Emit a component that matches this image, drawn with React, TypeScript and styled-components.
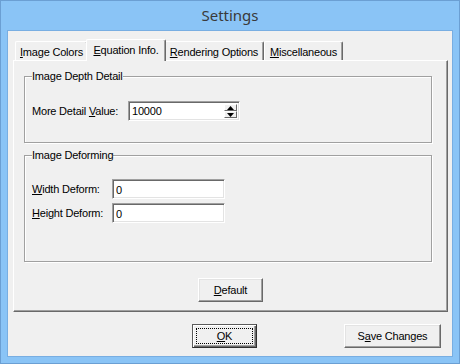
import React from 'react';
import styled, { createGlobalStyle, css } from 'styled-components';

const GlobalStyle = createGlobalStyle`
  html, body { margin: 0; padding: 0; background: #ffffff; }
  body { font-family: "Liberation Sans", Arial, sans-serif; }
  * { box-sizing: border-box; }
`;

const Window = styled.div`
  width: 460px;
  height: 364px;
  background: #8ac4f6;
  border: 1px solid #6b9fd3;
  display: flex;
  flex-direction: column;
`;

const TitleBar = styled.div`
  height: 29px;
  display: flex;
  align-items: center;
  justify-content: center;
  font-family: "Noto Sans", "Open Sans", sans-serif;
  font-size: 15px;
  color: #3a3a3a;
  padding-bottom: 1px;
`;

const Client = styled.div`
  flex: 1;
  margin: 0 6px 6px;
  border: 1px solid #78aee2;
  background: #f0f0f0;
  display: flex;
  flex-direction: column;
  font-family: "Liberation Sans", Arial, sans-serif;
  font-size: 11px;
  letter-spacing: -0.2px;
  color: #000;
`;

const TabControl = styled.div`
  margin: 8px 0 0 5px;
  width: 435px;
  display: flex;
  flex-direction: column;
`;

const TabStrip = styled.div`
  display: flex;
  align-items: flex-end;
  height: 21px;
  padding-left: 2px;
`;

const Tab = styled.div<{ $w: number; $active?: boolean }>`
  width: ${p => p.$w}px;
  height: 19px;
  background: #f0f0f0;
  border-top: 1px solid #ffffff;
  border-left: 1px solid #ffffff;
  border-right: 1px solid #696969;
  box-shadow: inset -1px 0 0 #a0a0a0;
  border-radius: 2px 2px 0 0;
  display: flex;
  align-items: center;
  justify-content: center;
  padding-top: 1px;
  white-space: nowrap;
  position: relative;
  ${p =>
    p.$active &&
    css`
      height: 22px;
      margin: 0 -2px -1px;
      padding-bottom: 3px;
      z-index: 2;
    `}
`;

const Accel = styled.span`
  text-decoration: underline;
  text-underline-offset: 1px;
`;

const Panel = styled.div`
  height: 252px;
  border: 1px solid;
  border-color: #ffffff #696969 #696969 #ffffff;
  box-shadow: inset -1px -1px 0 #a0a0a0;
  padding-top: 9px;
  display: flex;
  flex-direction: column;
`;

const GroupStack = styled.div`
  padding: 0 15px 0 10px;
  display: flex;
  flex-direction: column;
  gap: 6px;
`;

const Group = styled.fieldset<{ $pt: number; $pb: number }>`
  margin: 0;
  min-width: 0;
  border: 1px solid #a0a0a0;
  box-shadow: 1px 1px 0 #ffffff, inset 1px 1px 0 #ffffff;
  padding: ${p => p.$pt}px 7px ${p => p.$pb}px;
  display: flex;
  flex-direction: column;
  gap: 4px;
`;

const Legend = styled.legend`
  padding: 0;
  font-size: 11px;
  line-height: 13px;
  background: #f0f0f0;
`;

const Row = styled.div`
  display: flex;
  align-items: center;
  height: 20px;
`;

const Label = styled.span<{ $w: number }>`
  width: ${p => p.$w}px;
  white-space: nowrap;
`;

const sunken = css`
  border: 1px solid;
  border-color: #a0a0a0 #ffffff #ffffff #a0a0a0;
  box-shadow: inset 1px 1px 0 #696969, inset -1px -1px 0 #e3e3e3;
  background: #ffffff;
`;

const TextBox = styled.input<{ $w: number }>`
  ${sunken};
  width: ${p => p.$w}px;
  height: 20px;
  padding: 1px 3px 0;
  font-family: "Liberation Sans", Arial, sans-serif;
  font-size: 11px;
  letter-spacing: -0.2px;
  color: #000;
  outline: none;
`;

const SpinBox = styled.div`
  ${sunken};
  width: 112px;
  height: 20px;
  display: flex;
  align-items: stretch;
  padding: 2px;
`;

const SpinValue = styled.input`
  flex: 1;
  min-width: 0;
  border: none;
  background: transparent;
  padding: 0 1px;
  font-family: "Liberation Sans", Arial, sans-serif;
  font-size: 11px;
  letter-spacing: -0.2px;
  color: #000;
  outline: none;
`;

const SpinButtons = styled.div`
  width: 13px;
  display: flex;
  flex-direction: column;
`;

const SpinButton = styled.div`
  flex: 1;
  background: #f0f0f0;
  border: 1px solid;
  border-color: #ffffff #696969 #696969 #ffffff;
  display: flex;
  align-items: center;
  justify-content: center;
`;

const ButtonRow = styled.div`
  display: flex;
  justify-content: center;
  margin-top: 16px;
`;

const BottomBar = styled.div`
  display: grid;
  grid-template-columns: 1fr auto 1fr;
  margin-top: 12px;
  padding-right: 11px;
`;

const RightCell = styled.div`
  display: flex;
  justify-content: flex-end;
`;

const Button = styled.button<{ $w: number; $default?: boolean }>`
  width: ${p => p.$w}px;
  height: 24px;
  padding: 0;
  background: #f0f0f0;
  font-family: "Liberation Sans", Arial, sans-serif;
  font-size: 11px;
  letter-spacing: -0.2px;
  color: #000;
  border: 1px solid;
  border-color: #ffffff #696969 #696969 #ffffff;
  box-shadow: inset -1px -1px 0 #a0a0a0, inset 1px 1px 0 #e3e3e3;
  display: flex;
  align-items: stretch;
  ${p =>
    p.$default &&
    css`
      border-color: #5a5a5a #2e2e2e #2e2e2e #5a5a5a;
      box-shadow: inset 1px 1px 0 #ffffff, inset -1px -1px 0 #696969, inset -2px -2px 0 #a0a0a0;
    `}
`;

const ButtonFace = styled.span<{ $focus?: boolean }>`
  flex: 1;
  margin: 3px;
  border: 1px dotted ${p => (p.$focus ? '#000' : 'transparent')};
  display: flex;
  align-items: center;
  justify-content: center;
  white-space: nowrap;
`;

const Arrow = ({ up }: { up?: boolean }) => (
  <svg width="7" height="4" viewBox="0 0 7 4">
    {up ? <path d="M3.5 0 L7 4 L0 4 Z" fill="#000" /> : <path d="M0 0 L7 0 L3.5 4 Z" fill="#000" />}
  </svg>
);

export default function App() {
  return (
    <>
      <GlobalStyle />
      <Window>
        <TitleBar>Settings</TitleBar>
        <Client>
          <TabControl>
            <TabStrip>
              <Tab $w={73}>
                <span>
                  <Accel>I</Accel>mage Colors
                </span>
              </Tab>
              <Tab $w={80} $active>
                <span>
                  <Accel>E</Accel>quation Info.
                </span>
              </Tab>
              <Tab $w={100}>
                <span>
                  <Accel>R</Accel>endering Options
                </span>
              </Tab>
              <Tab $w={79}>
                <span>
                  <Accel>M</Accel>iscellaneous
                </span>
              </Tab>
            </TabStrip>
            <Panel>
              <GroupStack>
                <Group $pt={18} $pb={21}>
                  <Legend>Image Depth Detail</Legend>
                  <Row>
                    <Label $w={96}>
                      More Detail <Accel>V</Accel>alue:
                    </Label>
                    <SpinBox>
                      <SpinValue defaultValue="10000" />
                      <SpinButtons>
                        <SpinButton>
                          <Arrow up />
                        </SpinButton>
                        <SpinButton>
                          <Arrow />
                        </SpinButton>
                      </SpinButtons>
                    </SpinBox>
                  </Row>
                </Group>
                <Group $pt={17} $pb={38}>
                  <Legend>Image Deforming</Legend>
                  <Row>
                    <Label $w={80}>
                      <Accel>W</Accel>idth Deform:
                    </Label>
                    <TextBox $w={113} defaultValue="0" />
                  </Row>
                  <Row>
                    <Label $w={80}>
                      <Accel>H</Accel>eight Deform:
                    </Label>
                    <TextBox $w={113} defaultValue="0" />
                  </Row>
                </Group>
              </GroupStack>
              <ButtonRow>
                <Button $w={65}>
                  <ButtonFace>
                    <span>
                      <Accel>D</Accel>efault
                    </span>
                  </ButtonFace>
                </Button>
              </ButtonRow>
            </Panel>
          </TabControl>
          <BottomBar>
            <span />
            <Button $w={65} $default>
              <ButtonFace $focus>
                <span>
                  <Accel>O</Accel>K
                </span>
              </ButtonFace>
            </Button>
            <RightCell>
              <Button $w={97}>
                <ButtonFace>
                  <span>
                    S<Accel>a</Accel>ve Changes
                  </span>
                </ButtonFace>
              </Button>
            </RightCell>
          </BottomBar>
        </Client>
      </Window>
    </>
  );
}
